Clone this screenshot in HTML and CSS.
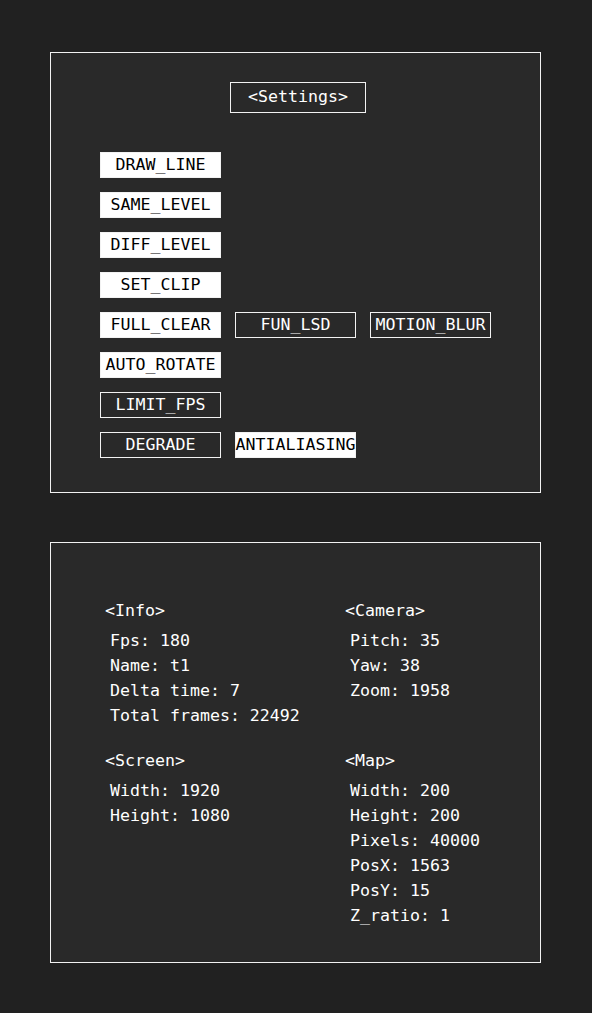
FILE: index.html
```html
<!DOCTYPE html>
<html>
<head>
<meta charset="utf-8">
<link rel="stylesheet" href="styles.css">
</head>
<body>
<div class="page">
  <section class="panel settings">
    <div class="title-row"><div class="title-box">&lt;Settings&gt;</div></div>
    <div class="buttons">
      <div class="row"><div class="btn on">DRAW_LINE</div></div>
      <div class="row"><div class="btn on">SAME_LEVEL</div></div>
      <div class="row"><div class="btn on">DIFF_LEVEL</div></div>
      <div class="row"><div class="btn on">SET_CLIP</div></div>
      <div class="row"><div class="btn on">FULL_CLEAR</div><div class="btn">FUN_LSD</div><div class="btn">MOTION_BLUR</div></div>
      <div class="row"><div class="btn on">AUTO_ROTATE</div></div>
      <div class="row"><div class="btn">LIMIT_FPS</div></div>
      <div class="row"><div class="btn">DEGRADE</div><div class="btn on">ANTIALIASING</div></div>
    </div>
  </section>
  <section class="panel info">
    <div class="grid">
      <div class="group">
        <div class="gtitle">&lt;Info&gt;</div>
        <ul class="items">
          <li>Fps: 180</li>
          <li>Name: t1</li>
          <li>Delta time: 7</li>
          <li>Total frames: 22492</li>
        </ul>
      </div>
      <div class="group">
        <div class="gtitle">&lt;Camera&gt;</div>
        <ul class="items">
          <li>Pitch: 35</li>
          <li>Yaw: 38</li>
          <li>Zoom: 1958</li>
        </ul>
      </div>
      <div class="group">
        <div class="gtitle">&lt;Screen&gt;</div>
        <ul class="items">
          <li>Width: 1920</li>
          <li>Height: 1080</li>
        </ul>
      </div>
      <div class="group">
        <div class="gtitle">&lt;Map&gt;</div>
        <ul class="items">
          <li>Width: 200</li>
          <li>Height: 200</li>
          <li>Pixels: 40000</li>
          <li>PosX: 1563</li>
          <li>PosY: 15</li>
          <li>Z_ratio: 1</li>
        </ul>
      </div>
    </div>
  </section>
</div>
</body>
</html>
```
FILE: styles.css
```css
html, body {
  margin: 0;
  padding: 0;
  background: #212121;
}
body {
  font-family: "DejaVu Sans Mono", "Liberation Mono", monospace;
  font-size: 16.6px;
  color: #ffffff;
}
.page {
  padding-top: 52px;
  padding-left: 50px;
  display: flex;
  flex-direction: column;
  gap: 49px;
}
.panel {
  width: 491px;
  box-sizing: border-box;
  border: 1px solid #f2f2f2;
  background: #292929;
}
.settings {
  height: 441px;
  padding: 29px 0 0 49px;
}
.title-row {
  display: flex;
  padding-left: 130px;
}
.title-box {
  width: 136px;
  height: 31px;
  box-sizing: border-box;
  border: 1px solid #f2f2f2;
  line-height: 27px;
  text-align: center;
}
.buttons {
  margin-top: 39px;
  display: flex;
  flex-direction: column;
  gap: 14px;
}
.row {
  display: flex;
  gap: 14px;
}
.btn {
  width: 121px;
  height: 26px;
  box-sizing: border-box;
  border: 1px solid #f2f2f2;
  line-height: 23px;
  text-align: center;
  white-space: nowrap;
  overflow: visible;
  display: flex;
  justify-content: center;
}
.btn.on {
  background: #ffffff;
  color: #000000;
}
.info {
  height: 421px;
  padding: 55px 0 0 54px;
}
.grid {
  display: grid;
  grid-template-columns: 240px 190px;
  row-gap: 20px;
}
.gtitle {
  line-height: 25px;
}
.items {
  list-style: none;
  margin: 5px 0 0 0;
  padding: 0 0 0 5px;
}
.items li {
  line-height: 25px;
  white-space: nowrap;
}
```
